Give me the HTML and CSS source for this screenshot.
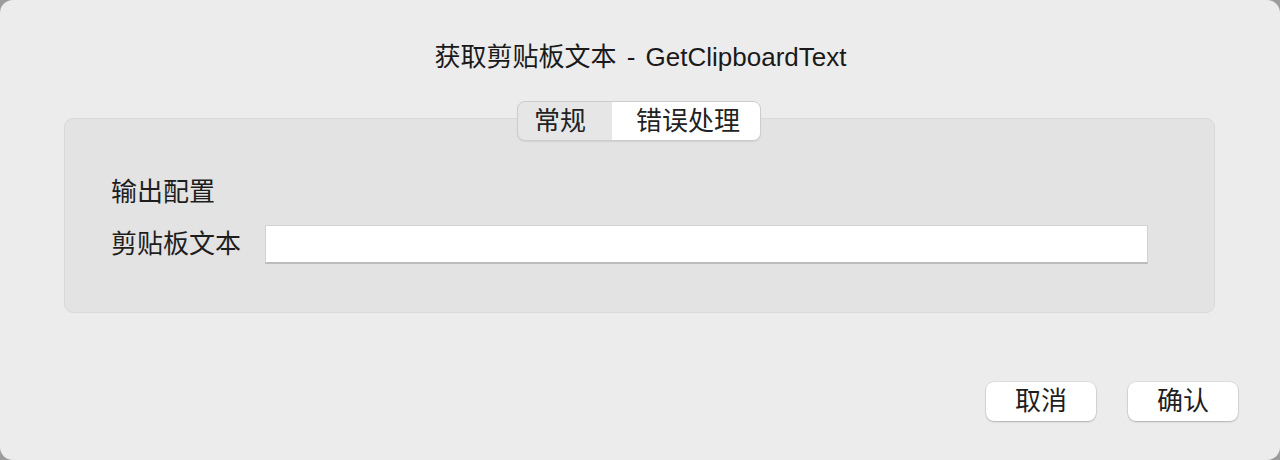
FILE: index.html
```html
<!DOCTYPE html>
<html lang="zh-CN">
<head>
<meta charset="utf-8">
<title>获取剪贴板文本 - GetClipboardText</title>
<link rel="stylesheet" href="styles.css">
</head>
<body>
<div class="window">
  <h1 class="title">获取剪贴板文本 - GetClipboardText</h1>
  <div class="tabs">
    <div class="tab tab-left">常规</div>
    <div class="tab tab-right active">错误处理</div>
  </div>
  <div class="group">
    <div class="section-label">输出配置</div>
    <div class="field-row">
      <label class="field-label">剪贴板文本</label>
      <div class="field-input"></div>
    </div>
  </div>
  <div class="actions">
    <button class="btn">取消</button>
    <button class="btn">确认</button>
  </div>
</div>
</body>
</html>
```
FILE: styles.css
```css
html, body {
  margin: 0;
  padding: 0;
  background: #9c9c9c;
}
body {
  width: 1280px;
  height: 460px;
  overflow: hidden;
  font-family: "Liberation Sans", "Noto Sans CJK SC", sans-serif;
  color: #1e1e1e;
}
.window {
  box-sizing: border-box;
  width: 1280px;
  height: 460px;
  background: #ececec;
  border-radius: 13px;
  padding-top: 42px;
  display: flex;
  flex-direction: column;
}
.title {
  margin: 0;
  font-size: 26px;
  font-weight: normal;
  line-height: 30px;
  text-align: center;
  color: #1a1a1a;
  word-spacing: 3px;
  padding-left: 1px;
}
.tabs {
  position: relative;
  z-index: 1;
  align-self: center;
  margin-top: 29px;
  margin-left: -2px;
  display: flex;
  height: 40px;
  box-sizing: border-box;
  border: 1px solid #cdcdcd;
  border-radius: 8px;
  background: #e6e6e6;
  box-shadow: 0 1px 1px rgba(0,0,0,0.08);
  overflow: hidden;
}
.tab {
  font-size: 26px;
  line-height: 38px;
  text-align: center;
  color: #222;
  box-sizing: border-box;
}
.tab-left {
  width: 94px;
  padding-right: 10px;
}
.tab-right {
  width: 148px;
  padding-left: 4px;
}
.tab.active {
  background: #ffffff;
}
.group {
  margin: -23px 65px 0 64px;
  box-sizing: border-box;
  height: 195px;
  background: #e3e3e3;
  border: 1px solid #d9d9d9;
  border-radius: 9px;
  padding: 58px 46px 0 46px;
  display: flex;
  flex-direction: column;
}
.section-label {
  font-size: 26px;
  line-height: 30px;
}
.field-row {
  margin-top: 18px;
  display: flex;
  align-items: center;
}
.field-label {
  font-size: 26px;
  line-height: 39px;
  width: 154px;
}
.field-input {
  box-sizing: border-box;
  width: 883px;
  height: 39px;
  background: #fff;
  border: 1px solid #d2d2d2;
  border-bottom: 2px solid #bcbcbc;
}
.actions {
  margin-top: 69px;
  margin-right: 42px;
  display: flex;
  justify-content: flex-end;
  gap: 32px;
}
.btn {
  width: 110px;
  height: 39px;
  padding: 0;
  border: none;
  border-radius: 8px;
  background: #fff;
  box-shadow: 0 0 0 0.5px rgba(0,0,0,0.12), 0 1px 2px rgba(0,0,0,0.2);
  font-family: "Liberation Sans", "Noto Sans CJK SC", sans-serif;
  font-size: 26px;
  line-height: 39px;
  color: #1e1e1e;
}
```
